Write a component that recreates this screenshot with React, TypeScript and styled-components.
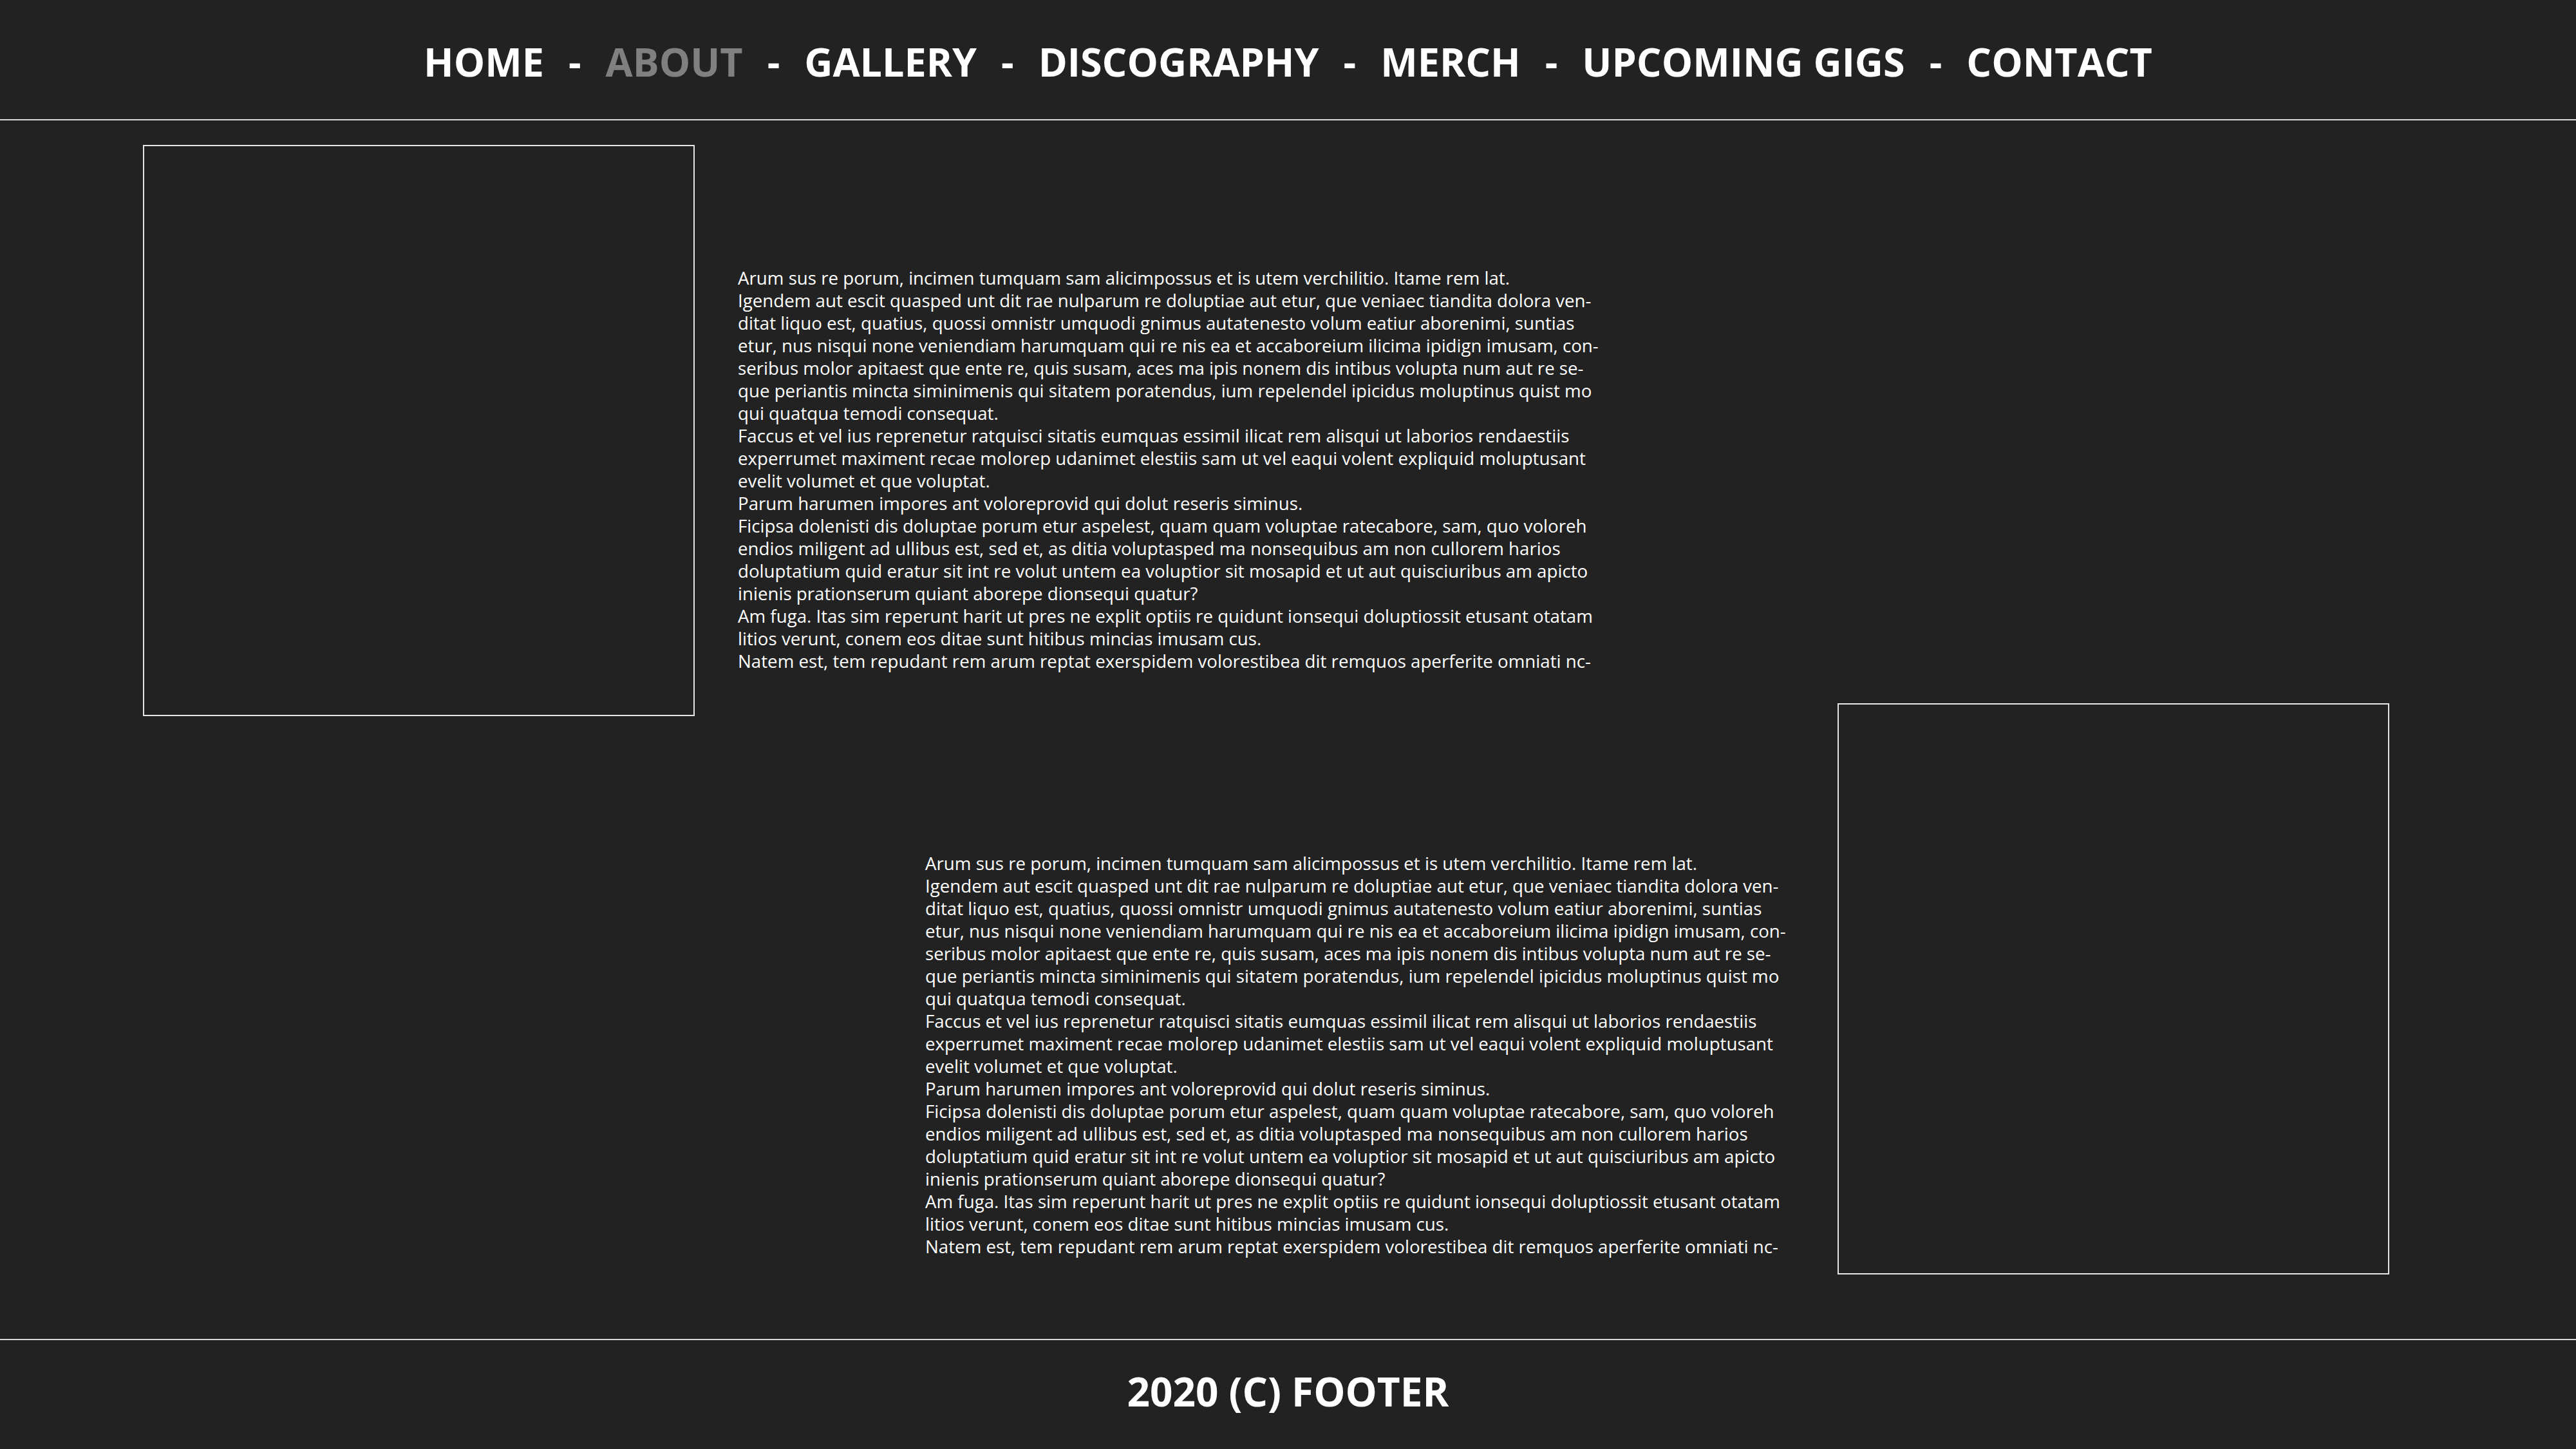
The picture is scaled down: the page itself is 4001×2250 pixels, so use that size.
import React from 'react';
import styled, { createGlobalStyle } from 'styled-components';

// ========== Style start ==========================

const GlobalStyle = createGlobalStyle`
  html, body {
    margin: 0;
    padding: 0;
    background: #222222;
  }
  body {
    font-family: "Open Sans", "Noto Sans", sans-serif;
    color: #ffffff;
  }
  * {
    box-sizing: border-box;
  }
`;

const Page = styled.div`
  display: flex;
  flex-direction: column;
  min-height: 2250px;
  background: #222222;
`;

const Header = styled.header`
  height: 187px;
  display: flex;
  align-items: center;
  justify-content: center;
  padding-top: 6px;
  border-bottom: 2px solid #d9d9d9;
`;

const NavList = styled.ul`
  list-style: none;
  margin: 0;
  padding: 0;
  display: flex;
  align-items: center;
  gap: 38px;
  font-size: 61px;
  font-weight: 700;
  line-height: 1;
`;

const NavItem = styled.li<{ $active?: boolean }>`
  color: ${(p) => (p.$active ? '#808080' : '#ffffff')};
  cursor: pointer;
  white-space: nowrap;
`;

const Separator = styled.li`
  color: #ffffff;
`;

const Main = styled.main`
  display: flex;
  flex-direction: column;
  padding-top: 38px;
`;

const Row = styled.section<{ $reverse?: boolean }>`
  display: flex;
  align-items: flex-start;
  justify-content: ${(p) => (p.$reverse ? 'flex-end' : 'flex-start')};
  padding: ${(p) => (p.$reverse ? '0 290px 0 0' : '0 0 0 222px')};
  gap: ${(p) => (p.$reverse ? '88px' : '67px')};
  margin-top: ${(p) => (p.$reverse ? '-20px' : '0')};
`;

const Picture = styled.div`
  width: 857px;
  height: 887px;
  flex-shrink: 0;
  border: 2px solid #e6e6e6;
`;

const TextBlock = styled.div<{ $top: number }>`
  width: 1329px;
  margin-top: ${(p) => p.$top}px;
  font-size: 27.7px;
  line-height: 35px;
  white-space: nowrap;
  color: #ffffff;

  p {
    margin: 0;
  }
`;

const Footer = styled.footer`
  margin-top: auto;
  height: 171px;
  border-top: 2px solid #d9d9d9;
  display: flex;
  align-items: center;
  justify-content: center;
  padding-bottom: 12px;
  font-size: 62px;
  font-weight: 700;
  line-height: 1;
`;

// ========== Style end ==========================

const links = ['HOME', 'ABOUT', 'GALLERY', 'DISCOGRAPHY', 'MERCH', 'UPCOMING GIGS', 'CONTACT'];

const paragraphs: string[][] = [
  [
    'Arum sus re porum, incimen tumquam sam alicimpossus et is utem verchilitio. Itame rem lat.',
  ],
  [
    'Igendem aut escit quasped unt dit rae nulparum re doluptiae aut etur, que veniaec tiandita dolora ven-',
    'ditat liquo est, quatius, quossi omnistr umquodi gnimus autatenesto volum eatiur aborenimi, suntias',
    'etur, nus nisqui none veniendiam harumquam qui re nis ea et accaboreium ilicima ipidign imusam, con-',
    'seribus molor apitaest que ente re, quis susam, aces ma ipis nonem dis intibus volupta num aut re se-',
    'que periantis mincta siminimenis qui sitatem poratendus, ium repelendel ipicidus moluptinus quist mo',
    'qui quatqua temodi consequat.',
  ],
  [
    'Faccus et vel ius reprenetur ratquisci sitatis eumquas essimil ilicat rem alisqui ut laborios rendaestiis',
    'experrumet maximent recae molorep udanimet elestiis sam ut vel eaqui volent expliquid moluptusant',
    'evelit volumet et que voluptat.',
  ],
  ['Parum harumen impores ant voloreprovid qui dolut reseris siminus.'],
  [
    'Ficipsa dolenisti dis doluptae porum etur aspelest, quam quam voluptae ratecabore, sam, quo voloreh',
    'endios miligent ad ullibus est, sed et, as ditia voluptasped ma nonsequibus am non cullorem harios',
    'doluptatium quid eratur sit int re volut untem ea voluptior sit mosapid et ut aut quisciuribus am apicto',
    'inienis prationserum quiant aborepe dionsequi quatur?',
  ],
  [
    'Am fuga. Itas sim reperunt harit ut pres ne explit optiis re quidunt ionsequi doluptiossit etusant otatam',
    'litios verunt, conem eos ditae sunt hitibus mincias imusam cus.',
  ],
  ['Natem est, tem repudant rem arum reptat exerspidem volorestibea dit remquos aperferite omniati nc-'],
];

const Copy: React.FC<{ top: number }> = ({ top }) => (
  <TextBlock $top={top}>
    {paragraphs.map((lines, i) => (
      <p key={i}>
        {lines.map((line, j) => (
          <React.Fragment key={j}>
            {line}
            {j < lines.length - 1 && <br />}
          </React.Fragment>
        ))}
      </p>
    ))}
  </TextBlock>
);

const App: React.FC = () => {
  return (
    <Page>
      <GlobalStyle />
      <Header>
        <nav>
          <NavList>
            {links.map((link, i) => (
              <React.Fragment key={link}>
                {i > 0 && <Separator>-</Separator>}
                <NavItem $active={link === 'ABOUT'}>{link}</NavItem>
              </React.Fragment>
            ))}
          </NavList>
        </nav>
      </Header>
      <Main>
        <Row>
          <Picture />
          <Copy top={189} />
        </Row>
        <Row $reverse>
          <Copy top={231} />
          <Picture />
        </Row>
      </Main>
      <Footer>2020 (C) FOOTER</Footer>
    </Page>
  );
};

export default App;
